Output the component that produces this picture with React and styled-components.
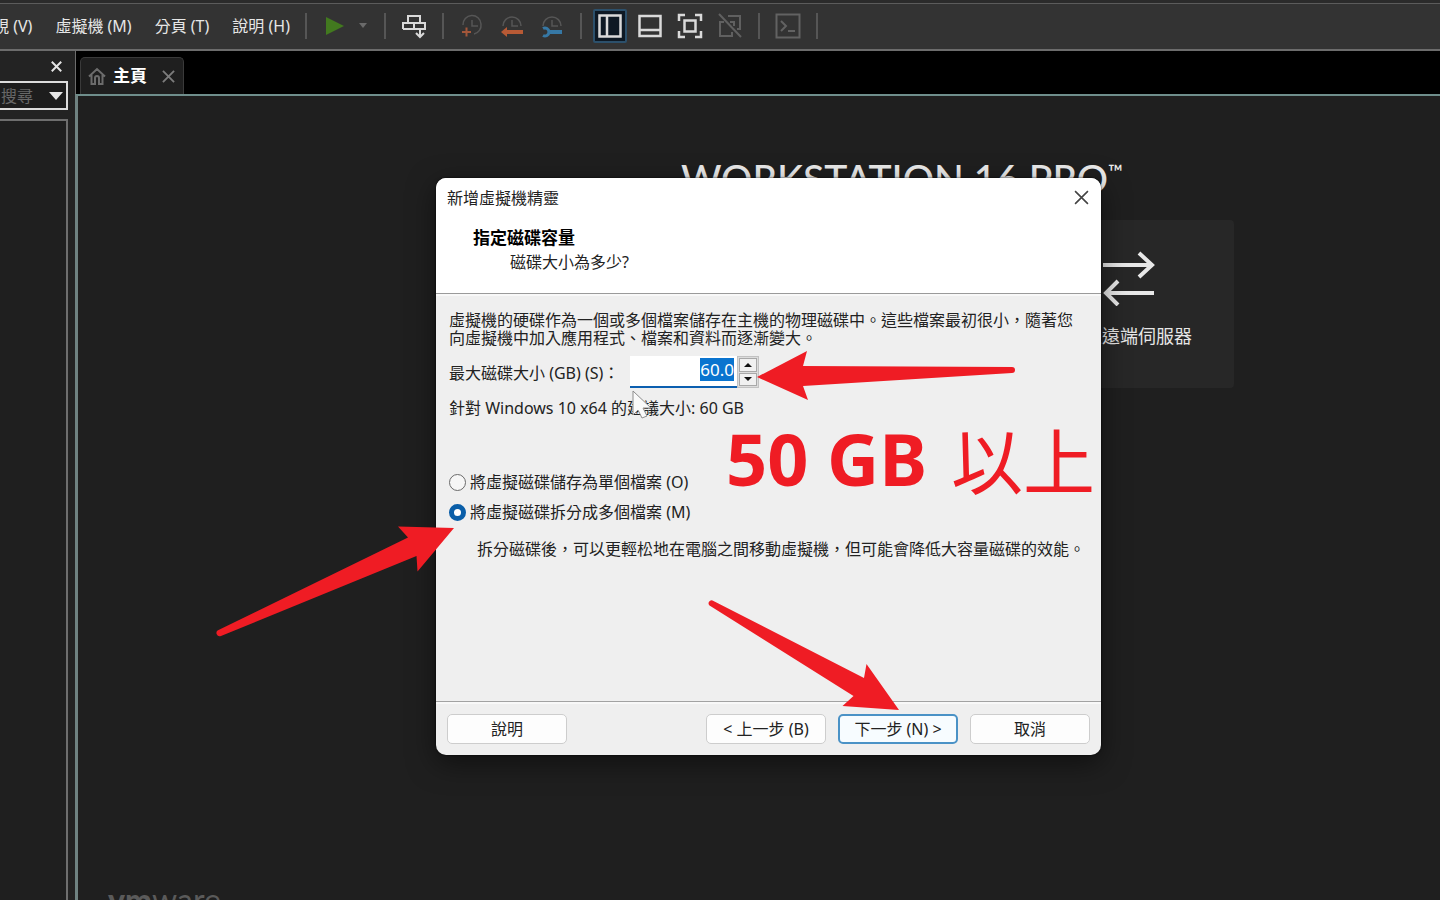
import React, { useEffect, useRef, useState } from "react";
import styled, { createGlobalStyle } from "styled-components";

const GlobalStyle = createGlobalStyle`
  * { box-sizing: border-box; }
  body {
    margin: 0;
    background: #1f1f1f;
    font-family: "Noto Sans", "Noto Sans CJK TC", sans-serif;
    font-size: 16px;
  }
  button, input { font: inherit; color: inherit; }
`;

const Desktop = styled.div`
  position: relative;
  display: flex;
  flex-direction: column;
  height: 100vh;
  overflow: hidden;
  color: #e6e6e6;
`;

/* ---------- menu and tool bar ---------- */

const TopBar = styled.header`
  display: flex;
  align-items: center;
  flex: none;
  height: 51px;
  background: #333333;
  border-top: 3px solid #2b2b2b;
  border-bottom: 2px solid #6c6c6c;
  box-shadow: inset 0 1px 0 #5c5c5c;
`;

const Menu = styled.nav`
  display: flex;
  gap: 23px;
  margin-left: -7px;
  margin-right: 7px;
`;

const MenuButton = styled.button`
  padding: 0;
  border: 0;
  background: none;
  line-height: 24px;
  white-space: nowrap;
`;

const Separator = styled.span`
  width: 2px;
  height: 26px;
  margin: 0 8px;
  background: #565656;
`;

const Tool = styled.button`
  display: flex;
  align-items: center;
  justify-content: center;
  flex: none;
  width: ${(p) => (p.$narrow ? "16px" : "40px")};
  height: 34px;
  margin: 0;
  margin-right: ${(p) => (p.$narrow ? "5px" : "0")};
  padding: 0;
  border: 0;
  background: none;
`;

const ActiveFrame = styled.span`
  display: flex;
  align-items: center;
  justify-content: center;
  width: 34px;
  height: 34px;
  border: 2px solid #2c506b;
  border-radius: 2px;
  background: #0e1924;
`;

/* ---------- side bar ---------- */

const Workspace = styled.div`
  display: flex;
  flex: 1;
  min-height: 0;
`;

const Sidebar = styled.aside`
  display: flex;
  flex-direction: column;
  flex: none;
  width: 75px;
  padding-right: 7px;
  background: #232323;
`;

const SidebarTop = styled.div`
  display: flex;
  align-items: center;
  justify-content: flex-end;
  height: 30px;
  padding-right: 5px;
`;

const IconButton = styled.button`
  display: flex;
  align-items: center;
  justify-content: center;
  width: ${(p) => p.$size || 14}px;
  height: ${(p) => p.$size || 14}px;
  padding: 0;
  border: 0;
  background: none;
`;

const SearchBox = styled.div`
  display: flex;
  align-items: center;
  height: 29px;
  border: 2px solid #dcdcdc;
  border-left: 0;
  background: #1d1d1d;
`;

const SearchInput = styled.input`
  flex: 1;
  width: 0;
  min-width: 0;
  padding: 0 0 0 1px;
  border: 0;
  outline: 0;
  background: none;
  &::placeholder { color: #686868; opacity: 1; }
`;

const Library = styled.div`
  flex: 1;
  margin-top: 9px;
  border: 2px solid #6e6e6e;
  border-width: 2px 2px 0 0;
  background: #1f1f1f;
`;

/* ---------- main area ---------- */

const Main = styled.main`
  display: flex;
  flex: 1;
  flex-direction: column;
  min-width: 0;
`;

const TabStrip = styled.div`
  display: flex;
  align-items: flex-end;
  flex: none;
  height: 43px;
  padding-left: 4px;
  background: #000000;
  border-left: 1px solid #6c6c6c;
`;

const Tab = styled.div`
  display: flex;
  align-items: center;
  gap: 7px;
  width: 104px;
  height: 37px;
  padding: 0 8px 0 7px;
  border: 1px solid #3a3a3a;
  border-bottom: 0;
  border-radius: 5px 5px 0 0;
  background: #1f1f1f;
`;

const TabTitle = styled.span`
  flex: 1;
  color: #ffffff;
  font-size: 17px;
  font-weight: 700;
  line-height: 24px;
`;

const Home = styled.section`
  display: flex;
  flex: 1;
  flex-direction: column;
  align-items: center;
  min-height: 0;
  padding: 60px 0 0 286px;
  border-top: 2px solid #6f8e8c;
  border-left: 3px solid #6f8281;
  background: #1f1f1f;
  overflow: hidden;
`;

const Product = styled.h1`
  display: flex;
  flex: none;
  margin: 0;
  color: #ececec;
  font-family: Lato, sans-serif;
  font-size: 39px;
  font-weight: 500;
  line-height: 44px;
  white-space: nowrap;
`;

const Mark = styled.span`
  font-size: 20px;
  line-height: 30px;
`;

const Cards = styled.div`
  display: flex;
  flex: none;
  justify-content: flex-end;
  width: 664px;
  margin-top: 20px;
`;

const Card = styled.button`
  display: flex;
  flex-direction: column;
  align-items: center;
  width: 210px;
  height: 168px;
  padding: 30px 0 0;
  border: 0;
  border-radius: 4px;
  background: #272727;
  font-size: 18px;
  line-height: 26px;
  gap: 17px;
`;

const Brand = styled.div`
  align-self: flex-start;
  flex: none;
  margin-top: 493px;
  margin-left: -256px;
  color: #5a5a5a;
  font-family: Lato, sans-serif;
  font-size: 32px;
  line-height: 38px;
  b { font-weight: 900; }
`;

/* ---------- wizard dialog ---------- */

const Dialog = styled.form`
  position: absolute;
  top: 178px;
  left: 436px;
  display: flex;
  flex-direction: column;
  width: 665px;
  height: 577px;
  border-radius: 10px;
  background: #efefef;
  color: #222222;
  overflow: hidden;
  box-shadow: 0 0 2px #000000, 0 8px 28px rgba(0, 0, 0, 0.5);
`;

const DialogHeader = styled.div`
  height: 116px;
  background: #ffffff;
  border-bottom: 1px solid #9a9a9a;
`;

const TitleRow = styled.div`
  display: flex;
  align-items: center;
  justify-content: space-between;
  height: 38px;
  padding: 0 12px 0 11px;
`;

const StepTitle = styled.h2`
  margin: 10px 0 0 37px;
  color: #000000;
  font-size: 17px;
  line-height: 24px;
`;

const StepText = styled.p`
  margin: 0 0 0 74px;
  line-height: 24px;
`;

const DialogBody = styled.div`
  flex: 1;
  padding: 15px 13px 0;
  border-top: 2px solid #f8f8f8;
`;

const Paragraph = styled.p`
  margin: 0;
  line-height: 18px;
`;

const SizeRow = styled.div`
  display: flex;
  align-items: center;
  height: 32px;
  margin-top: 9px;
`;

const SizeLabel = styled.label`
  width: 181px;
  white-space: nowrap;
`;

const SizeInput = styled.input`
  width: 107px;
  height: 32px;
  padding: 0 3px 4px;
  border: 0;
  border-bottom: 2px solid #0b5fb0;
  border-radius: 0;
  outline: 0;
  background: #ffffff;
  font-size: 17px;
  text-align: right;
  &::selection { background: #0a74cf; color: #ffffff; }
`;

const Spinner = styled.div`
  display: flex;
  flex-direction: column;
  gap: 1px;
  width: 22px;
  height: 32px;
  padding: 1px;
  border: 1px solid #c2c2c2;
  background: #dcdcdc;
`;

const SpinButton = styled.button`
  display: flex;
  flex: 1;
  align-items: center;
  justify-content: center;
  padding: 0;
  border: 1px solid #a8a8a8;
  background: #f0f0f0;
`;

const Hint = styled.p`
  margin: 8px 0 0;
  line-height: 24px;
`;

const Choices = styled.fieldset`
  display: flex;
  flex-direction: column;
  gap: 6px;
  margin: 50px 0 0;
  padding: 0;
  border: 0;
`;

const Choice = styled.label`
  display: flex;
  align-items: center;
  gap: 4px;
  line-height: 24px;
`;

const Radio = styled.input`
  appearance: none;
  width: 17px;
  height: 17px;
  margin: 0;
  border: 1px solid #6a6a6a;
  border-radius: 50%;
  background: #f6f6f6;
  &:checked {
    border: 5px solid #0a5ea8;
    background: #ffffff;
  }
`;

const ChoiceNote = styled.p`
  margin: 13px 0 0 28px;
  line-height: 24px;
  white-space: nowrap;
`;

const DialogFooter = styled.div`
  display: flex;
  gap: 12px;
  height: 54px;
  padding: 12px 11px 0;
  border-top: 1px solid #a2a2a2;
  box-shadow: inset 0 2px 0 #f8f8f8;
`;

const PushButton = styled.button`
  width: 120px;
  height: 30px;
  margin-right: ${(p) => (p.$leading ? "auto" : "0")};
  padding: 0;
  border: ${(p) => (p.$primary ? "2px solid #4a92c6" : "1px solid #cdcdcd")};
  border-radius: 5px;
  background: ${(p) => (p.$primary ? "#f7fcff" : "#fdfdfd")};
  line-height: 24px;
`;

/* ---------- tutorial marks over the window ---------- */

const Marks = styled.svg`
  position: absolute;
  top: 0;
  left: 0;
  pointer-events: none;
`;

const Callout = styled.p`
  position: absolute;
  top: 409px;
  left: 726px;
  display: flex;
  align-items: center;
  gap: 24px;
  margin: 0;
  color: #ef1c24;
  font-size: 72px;
  font-weight: 700;
  line-height: 98px;
  white-space: nowrap;
  pointer-events: none;
`;

const CalloutThin = styled.span`
  font-family: "Noto Sans CJK TC", sans-serif;
  font-weight: 400;
`;

/* ---------- drawings ---------- */

const Cross = ({ size, color, width }) => (
  <svg width={size} height={size} viewBox="0 0 14 14" stroke={color} strokeWidth={width} fill="none">
    <path d="M1 1 13 13M13 1 1 13" />
  </svg>
);

const Glyph = ({ color = "#dadada", width = 2, children }) => (
  <svg width="28" height="28" viewBox="0 0 28 28" fill="none" stroke={color} strokeWidth={width}>
    {children}
  </svg>
);

const ClockPart = () => (
  <path d="M5 13a9 9 0 0 1 18-1a9 9 0 0 1-7 10M14 8v6h6" stroke="#565656" strokeWidth="1.5" />
);

const TOOLS = [
  [
    {
      name: "傳送 Ctrl+Alt+Del",
      icon: (
        <Glyph>
          <path d="M8 10V4h12v6M3 17v-6h22v6H3M14 11v6M20 16v8M16 21l4 4 4-4" />
        </Glyph>
      ),
    },
  ],
  [
    {
      name: "建立快照",
      icon: (
        <Glyph>
          <ClockPart />
          <path d="M4 20h9M8.500 15.500v9" stroke="#a4573a" />
        </Glyph>
      ),
    },
    {
      name: "還原快照",
      icon: (
        <Glyph>
          <path d="M5 14a9 9 0 0 1 18 0M14 8v6h6" stroke="#565656" strokeWidth="1.5" />
          <path d="M8 20h17" stroke="#b85a35" strokeWidth="4" />
          <path d="M3 20l6-5v10z" fill="#b85a35" stroke="none" />
        </Glyph>
      ),
    },
    {
      name: "管理快照",
      icon: (
        <Glyph>
          <path d="M5 14a9 9 0 0 1 18 0M14 8v6h6" stroke="#565656" strokeWidth="1.5" />
          <path d="M11 20h13" stroke="#3678a5" strokeWidth="4" />
          <path d="M5 16.500a4 4 0 1 1 0 7" stroke="#3678a5" strokeWidth="3" />
        </Glyph>
      ),
    },
  ],
  [
    {
      name: "顯示程式庫",
      active: true,
      icon: (
        <Glyph width={2.5}>
          <path d="M3.500 3.500h21v21h-21zM11 3v22" />
        </Glyph>
      ),
    },
    {
      name: "顯示縮圖列",
      icon: (
        <Glyph width={2.5}>
          <path d="M3.500 4h21v20h-21zM3 18h22" />
        </Glyph>
      ),
    },
    {
      name: "全螢幕",
      icon: (
        <Glyph width={2.5}>
          <path d="M8.500 8.500h11v11h-11zM3 9V3h6M19 3h6v6M25 19v6h-6M9 25H3v-6" />
        </Glyph>
      ),
    },
    {
      name: "Unity",
      icon: (
        <Glyph color="#606060">
          <path d="M3 2l22 23M12 4h12v13h-3M8 10H4v14h12v-4M14 10h4v4" />
        </Glyph>
      ),
    },
  ],
  [
    {
      name: "主控台",
      icon: (
        <Glyph color="#626262">
          <path d="M2.500 2.500h23v23h-23zM7 9l5 5-5 5M14 19h7" />
        </Glyph>
      ),
    },
  ],
];

const MENUS = ["視 (V)", "虛擬機 (M)", "分頁 (T)", "說明 (H)"];

export default function App() {
  const sizeRef = useRef(null);
  const [size, setSize] = useState("60.0");
  const [mode, setMode] = useState("split");

  useEffect(() => {
    sizeRef.current.focus();
    sizeRef.current.select();
  }, []);

  const step = (by) => setSize((s) => (parseFloat(s || "0") + by).toFixed(1));

  return (
    <Desktop lang="zh-Hant">
      <GlobalStyle />
      <TopBar>
        <Menu>
          {MENUS.map((m) => (
            <MenuButton key={m}>{m}</MenuButton>
          ))}
        </Menu>
        <Separator />
        <Tool aria-label="開啟電源">
          <svg width="20" height="20" viewBox="0 0 20 20">
            <path d="M1 1 19 10 1 19z" fill="#42791f" />
          </svg>
        </Tool>
        <Tool $narrow aria-label="電源選項">
          <svg width="10" height="6" viewBox="0 0 10 6">
            <path d="M1 0h8L5 5z" fill="#6a6a6a" />
          </svg>
        </Tool>
        <Separator />
        {TOOLS.map((group, i) => (
          <React.Fragment key={i}>
            {group.map((t) => (
              <Tool key={t.name} aria-label={t.name}>
                {t.active ? <ActiveFrame>{t.icon}</ActiveFrame> : t.icon}
              </Tool>
            ))}
            <Separator />
          </React.Fragment>
        ))}
      </TopBar>

      <Workspace>
        <Sidebar>
          <SidebarTop>
            <IconButton aria-label="關閉程式庫">
              <Cross size={11} color="#e4e4e4" width={2.5} />
            </IconButton>
          </SidebarTop>
          <SearchBox>
            <SearchInput aria-label="搜尋" placeholder="搜尋" />
            <IconButton $size={20} aria-label="搜尋選項">
              <svg width="14" height="8" viewBox="0 0 14 8">
                <path d="M0 0h14L7 8z" fill="#e6e6e6" />
              </svg>
            </IconButton>
          </SearchBox>
          <Library />
        </Sidebar>

        <Main>
          <TabStrip>
            <Tab>
              <svg width="18" height="18" viewBox="0 0 18 18" fill="none" stroke="#6c6c6c" strokeWidth="2">
                <path d="M1 9.500 9 2l8 7.500M3.500 8v9H7v-6a2 2 0 0 1 4 0v6h3.500V8" />
              </svg>
              <TabTitle>主頁</TabTitle>
              <IconButton aria-label="關閉分頁">
                <Cross size={13} color="#7c7c7c" width={2} />
              </IconButton>
            </Tab>
          </TabStrip>
          <Home>
            <Product>
              WORKSTATION 16 PRO<Mark>™</Mark>
            </Product>
            <Cards>
              <Card>
                <svg width="52" height="56" viewBox="0 0 52 56" fill="none" stroke="#e8e8e8" strokeWidth="4">
                  <path d="M0 15h49M36 3l13 12-13 12M51 43H3M15 31 3 43l12 12" />
                </svg>
                連線遠端伺服器
              </Card>
            </Cards>
            <Brand>
              <b>vm</b>ware
            </Brand>
          </Home>
        </Main>
      </Workspace>

      <Dialog onSubmit={(e) => e.preventDefault()}>
        <DialogHeader>
          <TitleRow>
            <span>新增虛擬機精靈</span>
            <IconButton type="button" $size={16} aria-label="關閉">
              <Cross size={15} color="#444444" width={1.5} />
            </IconButton>
          </TitleRow>
          <StepTitle>指定磁碟容量</StepTitle>
          <StepText>磁碟大小為多少?</StepText>
        </DialogHeader>
        <DialogBody>
          <Paragraph>
            虛擬機的硬碟作為一個或多個檔案儲存在主機的物理磁碟中。這些檔案最初很小，隨著您向虛擬機中加入應用程式、檔案和資料而逐漸變大。
          </Paragraph>
          <SizeRow>
            <SizeLabel htmlFor="disk-size">最大磁碟大小 (GB) (S)：</SizeLabel>
            <SizeInput id="disk-size" ref={sizeRef} value={size} onChange={(e) => setSize(e.target.value)} />
            <Spinner>
              <SpinButton type="button" aria-label="增加" onClick={() => step(1)}>
                <svg width="8" height="4" viewBox="0 0 8 4"><path d="M0 4h8L4 0z" fill="#111111" /></svg>
              </SpinButton>
              <SpinButton type="button" aria-label="減少" onClick={() => step(-1)}>
                <svg width="8" height="4" viewBox="0 0 8 4"><path d="M0 0h8L4 4z" fill="#111111" /></svg>
              </SpinButton>
            </Spinner>
          </SizeRow>
          <Hint>針對 Windows 10 x64 的建議大小: 60 GB</Hint>
          <Choices>
            <Choice>
              <Radio type="radio" name="mode" checked={mode === "single"} onChange={() => setMode("single")} />
              將虛擬磁碟儲存為單個檔案 (O)
            </Choice>
            <Choice>
              <Radio type="radio" name="mode" checked={mode === "split"} onChange={() => setMode("split")} />
              將虛擬磁碟拆分成多個檔案 (M)
            </Choice>
          </Choices>
          <ChoiceNote>拆分磁碟後，可以更輕松地在電腦之間移動虛擬機，但可能會降低大容量磁碟的效能。</ChoiceNote>
        </DialogBody>
        <DialogFooter>
          <PushButton type="button" $leading>說明</PushButton>
          <PushButton type="button">&lt; 上一步 (B)</PushButton>
          <PushButton type="submit" $primary>下一步 (N) &gt;</PushButton>
          <PushButton type="button">取消</PushButton>
        </DialogFooter>
      </Dialog>

      <Marks width="1110" height="720" viewBox="0 0 1110 720" fill="#ef1c24" aria-hidden="true">
        <path d="M757 377 807 351 803 366 1012 367a3 3 0 0 1 0 6L803 386 808 400z" />
        <path d="M454 528 398 526.500 408 537.500 218.500 630a3 3 0 0 0 2.500 6L416.500 556 417.500 571.500z" />
        <path d="M899 710 866.500 664 864 678 712.500 600.500a3 3 0 0 0-3 5L853.500 696 842.500 706z" />
        <path
          d="M633 391v24l5-5 4 8 5-2-4-8h8z"
          fill="#fafafa"
          stroke="#8c8c8c"
          strokeWidth="1"
        />
      </Marks>
      <Callout>
        50 GB<CalloutThin>以上</CalloutThin>
      </Callout>
    </Desktop>
  );
}
